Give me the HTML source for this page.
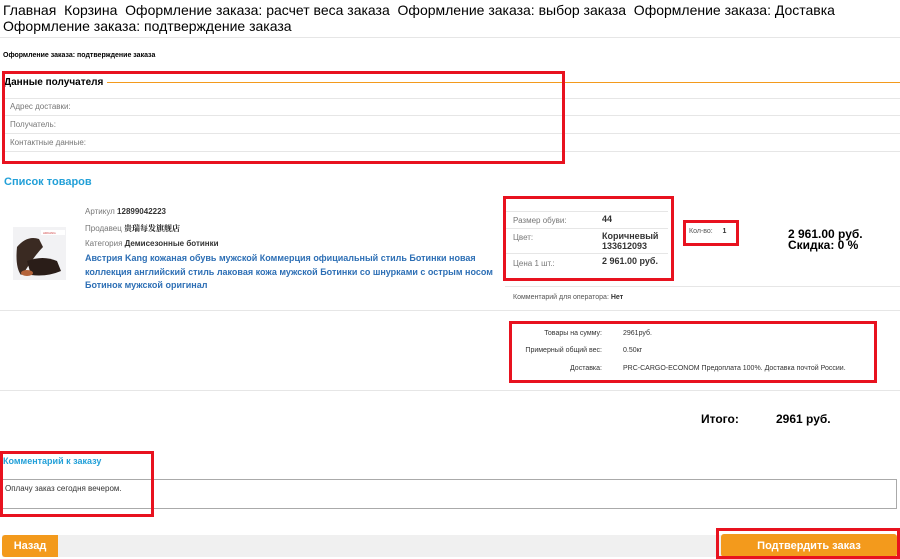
<!DOCTYPE html>
<html><head><meta charset="utf-8"><style>
body{margin:0;width:900px;height:559px;position:relative;overflow:hidden;background:#fff;font-family:"Liberation Sans",Arial,sans-serif;color:#000}
.a{position:absolute;white-space:nowrap}
.red{position:absolute;border:3px solid #e8121f;box-sizing:border-box}
.hl{position:absolute;height:1px;background:#e6e6e6}
.g{color:#777;font-size:8px}
.lnk{color:#2d6fb5;font-size:9px;font-weight:bold}
</style></head><body>
<div class="a" style="left:3px;top:2px;font-size:14px;line-height:16px;white-space:normal;width:897px">Главная&nbsp; Корзина&nbsp; Оформление заказа: расчет веса заказа&nbsp; Оформление заказа: выбор заказа&nbsp; Оформление заказа: Доставка Оформление заказа: подтверждение заказа</div>
<div class="hl" style="left:0;top:37px;width:900px"></div>
<div class="a" style="left:3px;top:52px;font-size:7px;font-weight:bold">Оформление заказа: подтверждение заказа</div>

<div class="a" style="left:107px;top:82px;width:793px;height:1px;background:#f39a1c"></div>
<div class="a" style="left:4px;top:77px;font-size:10px;font-weight:bold">Данные получателя</div>
<div class="hl" style="left:4px;top:98px;width:896px"></div>
<div class="hl" style="left:4px;top:115px;width:896px"></div>
<div class="hl" style="left:4px;top:133px;width:896px"></div>
<div class="hl" style="left:4px;top:151px;width:896px"></div>
<div class="a g" style="left:10px;top:102px">Адрес доставки:</div>
<div class="a g" style="left:10px;top:120px">Получатель:</div>
<div class="a g" style="left:10px;top:138px">Контактные данные:</div>
<div class="red" style="left:2px;top:71px;width:563px;height:93px"></div>

<div class="a" style="left:4px;top:176px;font-size:11px;font-weight:bold;color:#22a0d8">Список товаров</div>

<svg class="a" style="left:13px;top:227px" width="53" height="53"><rect width="53" height="53" fill="#f2f2f4"/><rect x="28" y="3" width="24" height="5" fill="#fff"/><text x="30" y="7" font-size="3" fill="#c33" font-family="Liberation Sans">ADKANG</text><path d="M4 20 Q14 8 26 12 L30 20 Q22 28 12 44 L8 48 Q2 40 4 20Z" fill="#3a2a22"/><path d="M14 34 Q30 28 44 34 L48 44 Q34 50 18 48Z" fill="#2a1d18"/><ellipse cx="14" cy="46" rx="6" ry="3" fill="#b4633a"/></svg>

<div class="a g" style="left:85px;top:207px">Артикул <b style="color:#333">12899042223</b></div>
<div class="a g" style="left:85px;top:223px">Продавец <b style="color:#222;font-family:'Noto Serif CJK SC',serif">贵瑞每发旗舰店</b></div>
<div class="a g" style="left:85px;top:239px">Категория <b style="color:#333">Демисезонные ботинки</b></div>
<div class="a lnk" style="left:85px;top:252px;line-height:13.5px;white-space:normal;width:420px">Австрия Kang кожаная обувь мужской Коммерция официальный стиль Ботинки новая коллекция английский стиль лаковая кожа мужской Ботинки со шнурками с острым носом Ботинок мужской оригинал</div>

<div class="hl" style="left:506px;top:211px;width:162px"></div>
<div class="hl" style="left:506px;top:228px;width:162px"></div>
<div class="hl" style="left:506px;top:253px;width:162px"></div>
<div class="a g" style="left:513px;top:216px">Размер обуви:</div>
<div class="a" style="left:602px;top:214px;font-size:9px;font-weight:bold;color:#333">44</div>
<div class="a g" style="left:513px;top:233px">Цвет:</div>
<div class="a" style="left:602px;top:231px;font-size:9px;font-weight:bold;color:#333;line-height:10px">Коричневый<br>133612093</div>
<div class="a g" style="left:513px;top:259px">Цена 1 шт.:</div>
<div class="a" style="left:602px;top:256px;font-size:9px;font-weight:bold;color:#333">2 961.00 руб.</div>
<div class="red" style="left:503px;top:196px;width:171px;height:85px"></div>

<div class="a" style="left:689px;top:228px;font-size:7px;color:#555">Кол-во: &nbsp;&nbsp;&nbsp;&nbsp;<b style="color:#333">1</b></div>
<div class="red" style="left:683px;top:220px;width:56px;height:26px"></div>

<div class="a" style="left:788px;top:229px;font-size:12px;font-weight:bold;line-height:11px">2 961.00 руб.<br>Скидка: 0 %</div>

<div class="hl" style="left:505px;top:286px;width:395px"></div>
<div class="a" style="left:513px;top:294px;font-size:7px;color:#555">Комментарий для оператора: <b style="color:#333">Нет</b></div>
<div class="hl" style="left:0;top:310px;width:900px"></div>

<div class="a" style="left:510px;top:330px;width:92px;text-align:right;font-size:7px;color:#333">Товары на сумму:</div>
<div class="a" style="left:510px;top:347px;width:92px;text-align:right;font-size:7px;color:#333">Примерный общий вес:</div>
<div class="a" style="left:510px;top:365px;width:92px;text-align:right;font-size:7px;color:#333">Доставка:</div>
<div class="a" style="left:623px;top:330px;font-size:7px;color:#333">2961руб.</div>
<div class="a" style="left:623px;top:347px;font-size:7px;color:#333">0.50кг</div>
<div class="a" style="left:623px;top:365px;font-size:7px;color:#333">PRC-CARGO-ECONOM Предоплата 100%. Доставка почтой России.</div>
<div class="red" style="left:509px;top:321px;width:368px;height:62px"></div>
<div class="hl" style="left:0;top:390px;width:900px"></div>

<div class="a" style="left:701px;top:412px;font-size:12px;font-weight:bold">Итого:</div>
<div class="a" style="left:776px;top:412px;font-size:12px;font-weight:bold">2961 руб.</div>

<div class="a" style="left:3px;top:456px;font-size:9px;font-weight:bold;color:#22a0d8">Комментарий к заказу</div>
<div class="a" style="left:2px;top:479px;width:895px;height:30px;border:1px solid #aaa;box-sizing:border-box"></div>
<div class="a" style="left:5px;top:484px;font-size:8px;color:#333">Оплачу заказ сегодня вечером.</div>
<div class="red" style="left:0;top:451px;width:154px;height:66px"></div>

<div class="a" style="left:2px;top:535px;width:898px;height:22px;background:#f0f0f0"></div>
<div class="a" style="left:2px;top:535px;width:56px;height:22px;background:#f39a1c;border-radius:3px 0 0 3px;color:#fff;font-size:11px;font-weight:bold;text-align:center;line-height:22px">Назад</div>
<div class="a" style="left:721px;top:534px;width:176px;height:23px;background:#f39a1c;border-radius:3px;color:#fff;font-size:11px;font-weight:bold;text-align:center;line-height:25px">Подтвердить заказ</div>
<div class="red" style="left:716px;top:528px;width:184px;height:31px"></div>
</body></html>
